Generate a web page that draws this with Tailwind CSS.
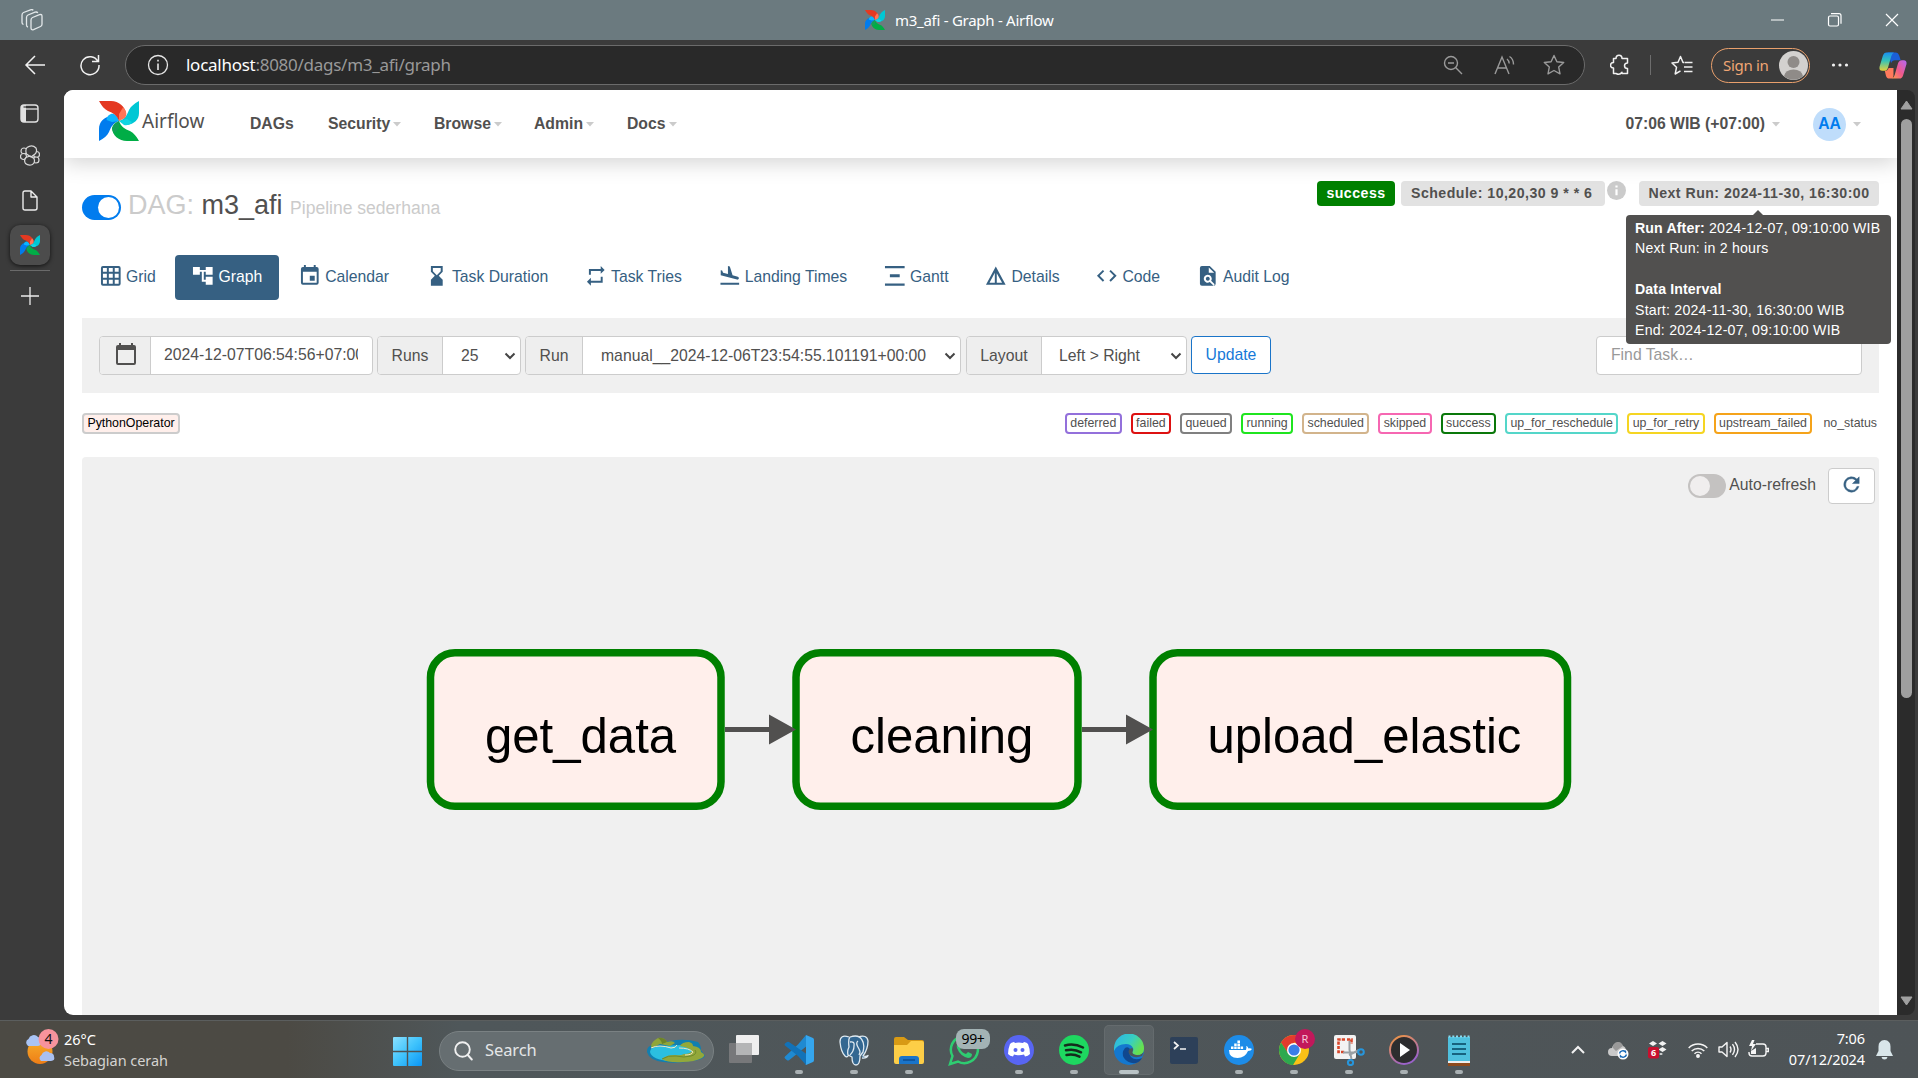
<!DOCTYPE html>
<html lang="en">
<head>
<meta charset="utf-8">
<title>m3_afi - Graph - Airflow</title>
<script src="https://cdn.jsdelivr.net/npm/@tailwindcss/browser@4"></script>
</head>
<body class="w-[1918px] h-[1078px] overflow-hidden bg-[#3b3b3b] flex flex-col font-['Noto_Sans',sans-serif]">

<svg class="hidden">
  <symbol id="pinwheel" viewBox="0 0 40 40">
    <path fill="#017cee" d="M0 40V28C0 21 5 16 12 15L20 20C14 22 12 26 10 31C8 35 5 37 0 40Z"/>
    <path fill="#0cb6ff" d="M7.500 19C8 14 12 12 15 13Q19 15 20 20L13 21Z"/>
    <path fill="#00ad46" d="M40 40H28C20 40 13 34 13 27L20 20C22 26 26 28 31 30C35 32 37 35 40 40Z"/>
    <path fill="#11a055" d="M13 27Q14 22 20 20L20 27L16 32Q13 30 13 27Z"/>
    <path fill="#00c7d4" d="M40 0V12C40 19 35 23 28 24L20 20C26 18 28 14 30 9C32 5 35 3 40 0Z"/>
    <path fill="#11d5e2" d="M33 21Q30 25 25 24L20 20L28 18Z"/>
    <path fill="#e43921" d="M0 0H12C20 0 26 6 27 12L20 20C18 14 14 12 9 10C5 8 3 5 0 0Z"/>
    <path fill="#ff7557" d="M24 6.500C28 10 28 14 26 17L20 20L20 13Z"/>
  </symbol>
  <symbol id="caret" viewBox="0 0 8 5"><path d="M0 0h8L4 4.500z" fill="#cbcbcb"/></symbol>
  <symbol id="chev" viewBox="0 0 12 8"><path d="M1.500 1.500l4.500 4.500 4.500-4.500" fill="none" stroke="#454545" stroke-width="2"/></symbol>
</svg>

<!-- Window title bar -->
<header class="relative h-[40px] shrink-0 bg-[#6b7a7f] flex items-center text-white">
  <svg class="ml-[21px] w-[23px] h-[22px]" viewBox="0 0 23 22" fill="none" stroke="#e3e8ea" stroke-width="1.300" stroke-linejoin="round"><path d="M11.500 8.500l7-2.800q2.500-.8 2.500 1.500v8q0 1.700-1.500 2.300l-7 3.200q-2.500.7-2.500-2V11q0-1.800 1.500-2.500zM7 18q-1.500-.3-1.500-2V8.500q0-1.800 1.500-2.500l7-2.800q2-.7 2.800.8M2.500 15.500Q1 15 1 13.500V6q0-1.800 1.500-2.500l7-2.700q2-.6 2.700.6"/></svg>
  <div class="ml-[821px] flex items-center gap-[10px]">
    <svg class="w-[20px] h-[20px]"><use href="#pinwheel"/></svg>
    <span class="text-[15px] tracking-[-0.27px] whitespace-nowrap">m3_afi - Graph - Airflow</span>
  </div>
  <svg class="ml-auto mr-[19px] w-[129px] h-[16px]" viewBox="0 0 129 16" fill="none" stroke="#fff" stroke-width="1.200"><path d="M1 8h13M116 2l12 12M128 2l-12 12"/><rect x="58.500" y="4" width="10" height="10" rx="1.500"/><path d="M61 1.700h8q2 0 2 2v8"/></svg>
</header>

<!-- Address toolbar -->
<div class="h-[50px] shrink-0 flex items-center">
  <svg class="ml-[24px] w-[22px] h-[20px]" viewBox="0 0 22 20" fill="none" stroke="#f2f2f2" stroke-width="1.500"><path d="M21 10H2M11 1L2 10l9 9"/></svg>
  <svg class="ml-[33px] w-[22px] h-[22px]" viewBox="0 0 22 22" fill="none" stroke="#f2f2f2" stroke-width="1.500"><path d="M19 7.500A9 9 0 1 0 20 11M19.500 1v6.500H13"/></svg>
  <div class="ml-[24px] w-[1460px] h-[40px] rounded-full border border-[#6b6b6b] bg-[#292929] flex items-center">
    <svg class="ml-[21px] w-[22px] h-[22px]" viewBox="0 0 22 22" fill="none" stroke="#e6e6e6" stroke-width="1.300"><circle cx="11" cy="11" r="9.500"/><path d="M11 9.500v6.500M11 5.800v1.800" stroke-width="1.600"/></svg>
    <span class="ml-[17px] text-[17px] tracking-[-0.27px] text-[#999] whitespace-nowrap"><span class="text-white">localhost</span>:8080/dags/m3_afi/graph</span>
    <svg class="ml-auto w-[20px] h-[20px]" viewBox="0 0 20 20" fill="none" stroke="#9a9a9a" stroke-width="1.400"><circle cx="8" cy="8" r="6.500"/><path d="M5 8h6M12.800 12.800L19 19"/></svg>
    <svg class="ml-[31px] w-[21px] h-[20px]" viewBox="0 0 21 20" fill="none" stroke="#9a9a9a" stroke-width="1.400"><path d="M1 19L8 2l7 17M3.500 13h9M13 4q2 1.500 2.200 4.500M15.500 1.500q4 2.500 4 8"/></svg>
    <svg class="ml-[28px] mr-[19px] w-[22px] h-[22px]" viewBox="0 0 22 22" fill="none" stroke="#9a9a9a" stroke-width="1.400" stroke-linejoin="round"><path d="M11 1.500l2.900 6.200 6.800.8-5 4.600 1.300 6.700-6-3.300-6 3.300 1.300-6.700-5-4.600 6.800-.8z"/></svg>
  </div>
  <svg class="ml-[25px] w-[20px] h-[22px]" viewBox="0 0 20 22" fill="none" stroke="#f0f0f0" stroke-width="1.500" stroke-linejoin="round"><path d="M6 4.500C6 0 12 0 12 4.500h5.500V9C13.500 9 13.500 14.500 17.500 14.500V19.500H12C12 15.500 12 22.500 6 19.500H3.500V14C-.5 14 -.5 8.500 3.500 8.500V4.500z"/></svg>
  <div class="ml-[20px] w-px h-[20px] bg-[#6d6d6d]"></div>
  <svg class="ml-[20px] w-[22px] h-[21px]" viewBox="0 0 22 21" fill="none" stroke="#f0f0f0" stroke-width="1.500" stroke-linejoin="round"><path d="M13.500 7.500l-1.500 0L9.500 1.500 7 7.200l-6 .8 4.500 4.300L4.200 19l5.300-3.200M14 7.500h7.500M13 12h8.500M13 16.500h8.500"/></svg>
  <div class="ml-[18px] w-[99px] h-[35px] rounded-full border-[1.5px] border-[#eaa06c] flex items-center justify-between pl-[11px] pr-px text-[#f0a674]">
    <span class="text-[15px] tracking-[-0.3px] whitespace-nowrap">Sign in</span>
    <svg class="w-[29px] h-[29px]" viewBox="0 0 29 29"><circle cx="14.500" cy="14.500" r="14.500" fill="#d3d1cf"/><circle cx="14.500" cy="11" r="6" fill="#8f8b88"/><path d="M5 25q1.500-6.500 9.500-6.500T24 25a14 14 0 0 1-19 0z" fill="#8f8b88"/></svg>
  </div>
  <svg class="ml-[21px] w-[18px] h-[4px]" viewBox="0 0 18 4" fill="#f2f2f2"><circle cx="2.500" cy="2" r="1.600"/><circle cx="9" cy="2" r="1.600"/><circle cx="15.500" cy="2" r="1.600"/></svg>
  <svg class="ml-[30px] w-[28px] h-[27px]" viewBox="0 0 29 27">
    <defs><linearGradient id="cpa" x1="0" y1="0" x2="0" y2="1"><stop offset="0" stop-color="#1a8ff0"/><stop offset=".45" stop-color="#35c3b8"/><stop offset="1" stop-color="#e8d13a"/></linearGradient><linearGradient id="cpb" x1="1" y1="0" x2="0" y2="1"><stop offset="0" stop-color="#b268f5"/><stop offset=".55" stop-color="#f0598b"/><stop offset="1" stop-color="#ff9b4a"/></linearGradient></defs>
    <path fill="#1b5fd8" d="M9 0h8q3 0 4 3.500L22.500 8h-6q-3 0-4 3z"/>
    <path fill="#ff7a5c" d="M14 27h-3q-3 0-3.800-3L6 19q3 0 4-3h5v8q-.5 2-1 3z"/>
    <path fill="url(#cpa)" d="M8 0h7.500q-2 1-2.800 4l-3.500 12q-1 3-4 3H3.500Q0 19 .5 15L4 3.500Q5 0 8 0z"/>
    <path fill="url(#cpb)" d="M21 27h-7.500q2-1 2.800-4l3.500-12q1-3 4-3h1.700q3.500 0 3 4L25 23.500q-1 3.500-4 3.500z"/>
  </svg>
</div>

<!-- Sidebar, page, scrollbar -->
<div class="h-[925px] shrink-0 flex">
  <aside class="w-[64px] shrink-0 flex flex-col items-center pr-[5px]">
    <svg class="mt-[14px] w-[19px] h-[19px]" viewBox="0 0 19 19"><path d="M1 4q0-3 3-3h2v17H4q-3 0-3-3z" fill="#e2e2e2"/><rect x="1" y="1" width="17" height="17" rx="3" fill="none" stroke="#e2e2e2" stroke-width="1.400"/><path d="M1 5h17" stroke="#e2e2e2" stroke-width="1.300"/><path d="M3.500 3h12" stroke="#3b3b3b" stroke-width="1.200"/></svg>
    <svg class="mt-[22px] w-[20px] h-[21px]" viewBox="0 0 20 21" fill="#3b3b3b" stroke="#d8d8d8" stroke-width="1.200"><circle cx="4" cy="6" r="3"/><circle cx="3.500" cy="11.500" r="3"/><circle cx="16.500" cy="9.500" r="3"/><circle cx="16" cy="15" r="3"/><path d="M7 2.500Q12-1 16 3q1.500 3.500-1 6L11 12 6.500 9Q5 5 7 2.500zM6 12.500l4-1.500 4 2.500q1.500 4-1.500 6-4 1.500-7-1-2-3 .5-6z"/></svg>
    <svg class="mt-[24px] w-[16px] h-[21px]" viewBox="0 0 16 21" fill="none" stroke="#ececec" stroke-width="1.400" stroke-linejoin="round"><path d="M1 3q0-2 2-2h6l6 6v11q0 2-2 2H3q-2 0-2-2zM9 1v6h6"/></svg>
    <div class="mt-[14px] w-[40px] h-[40px] rounded-[10px] bg-[#4c4c4c] shadow-[0_1px_4px_rgba(0,0,0,.7)] flex items-center justify-center"><svg class="w-[20px] h-[20px]"><use href="#pinwheel"/></svg></div>
    <div class="mt-[5px] w-[40px] h-px bg-[#6a6a6a]"></div>
    <svg class="mt-[16px] w-[18px] h-[18px]" viewBox="0 0 18 18" stroke="#ececec" stroke-width="1.300"><path d="M9 0v18M0 9h18"/></svg>
  </aside>

  <main class="w-[1833px] shrink-0 bg-white rounded-l-[9px] overflow-hidden flex flex-col font-['Liberation_Sans',Arial,sans-serif] text-[15.75px] text-[#51504f]">
    <nav class="relative z-10 h-[68px] shrink-0 flex items-center font-bold shadow-[0_5px_20px_rgba(0,0,0,.17)] bg-white whitespace-nowrap">
      <svg class="ml-[35px] mt-[-7px] w-[40px] h-[40px]"><use href="#pinwheel"/></svg>
      <span class="ml-[3px] mt-[-6px] w-[62px] font-normal text-[19px] font-['Noto_Sans',sans-serif]">Airflow</span>
      <span class="ml-[46px] w-[78px]">DAGs</span>
      <span class="w-[106px] flex items-center gap-[3px]">Security<svg class="w-[8px] h-[5px]"><use href="#caret"/></svg></span>
      <span class="w-[100px] flex items-center gap-[3px]">Browse<svg class="w-[8px] h-[5px]"><use href="#caret"/></svg></span>
      <span class="w-[93px] flex items-center gap-[3px]">Admin<svg class="w-[8px] h-[5px]"><use href="#caret"/></svg></span>
      <span class="flex items-center gap-[3px]">Docs<svg class="w-[8px] h-[5px]"><use href="#caret"/></svg></span>
      <span class="ml-auto flex items-center gap-[7px]">07:06 WIB (+07:00)<svg class="w-[8px] h-[5px]"><use href="#caret"/></svg></span>
      <span class="ml-[33px] w-[33px] h-[33px] rounded-full bg-[#bfddfb] text-[#017cee] flex items-center justify-center">AA</span>
      <svg class="ml-[7px] mr-[36px] w-[8px] h-[5px]"><use href="#caret"/></svg>
    </nav>

    <div class="px-[18px] flex flex-col flex-1">
      <div class="h-[97px] shrink-0 flex items-start">
        <div class="mt-[37px] w-[39px] h-[25px] rounded-full bg-[#017cee] p-[2px] flex justify-end"><div class="w-[21px] h-[21px] rounded-full bg-white"></div></div>
        <h3 class="ml-[7px] mt-[32px] text-[27px] leading-[31px] whitespace-nowrap"><span class="text-[#cbcbcb]">DAG:</span> m3_afi <span class="text-[17.55px] text-[#cbcbcb]">Pipeline sederhana</span></h3>
        <div class="ml-auto mt-[23px] flex items-start text-[14.175px] leading-[25px] font-bold tracking-[0.47px] whitespace-nowrap">
          <span class="w-[78px] h-[25px] rounded-[4px] bg-[#008000] text-white text-center">success</span>
          <span class="ml-[6px] w-[204px] h-[25px] rounded-[4px] bg-[#e2e2e2] pl-[10px]">Schedule: 10,20,30 9 * * 6</span>
          <svg class="ml-[2px] w-[19px] h-[19px]" viewBox="0 0 19 19"><circle cx="9.500" cy="9.500" r="9.500" fill="#cbcbcb"/><path d="M8.400 4.500h2.200v2H8.400zM8.400 8.200h2.200v6H8.400z" fill="#fff"/></svg>
          <span class="relative ml-[13px] w-[240px] h-[25px] rounded-[4px] bg-[#e2e2e2] text-center">Next Run: 2024-11-30, 16:30:00
            <span class="absolute z-20 left-[-13px] top-[34px] w-[265px] h-[129px] rounded-[4px] bg-[#51504f] text-white text-left font-normal tracking-[0.22px] leading-[20.4px] pl-[9px] pt-[3px]"><svg class="absolute left-[127px] top-[-5px] w-[10px] h-[5px]" viewBox="0 0 10 5"><path d="M0 5L5 0l5 5z" fill="#51504f"/></svg><b class="tracking-[0.12px]">Run After:</b> 2024-12-07, 09:10:00 WIB<br>Next Run: in 2 hours<br><br><b class="tracking-[0.12px]">Data Interval</b><br>Start: 2024-11-30, 16:30:00 WIB<br>End: 2024-12-07, 09:10:00 WIB</span>
          </span>
        </div>
      </div>

      <!-- View tabs -->
      <div class="h-[45px] shrink-0 flex gap-[2.250px] text-[#366082] fill-[#366082] whitespace-nowrap leading-[43px] [&>a]:flex [&>a]:pl-[16.800px] [&>a]:pr-[16.600px] [&>a]:gap-[3.600px] [&_svg]:w-[23.600px] [&_svg]:h-[23.600px] [&_svg]:mt-[9px]">
        <a><svg viewBox="0 0 24 24"><path d="M20 2H4a2 2 0 0 0-2 2v16a2 2 0 0 0 2 2h16a2 2 0 0 0 2-2V4a2 2 0 0 0-2-2zM8 20H4v-4h4zm0-6H4v-4h4zm0-6H4V4h4zm6 12h-4v-4h4zm0-6h-4v-4h4zm0-6h-4V4h4zm6 12h-4v-4h4zm0-6h-4v-4h4zm0-6h-4V4h4z"/></svg>Grid</a>
        <a class="bg-[#366082] text-white fill-white rounded-[4px]"><svg viewBox="0 0 24 24"><path d="M22 11V3h-7v3H9V3H2v8h7V8h2v10h4v3h7v-8h-7v3h-2V8h2v3z"/></svg>Graph</a>
        <a><svg viewBox="0 0 24 24"><path d="M17 12h-5v5h5v-5zM16 1v2H8V1H6v2H5a2 2 0 0 0-2 2v14a2 2 0 0 0 2 2h14a2 2 0 0 0 2-2V5a2 2 0 0 0-2-2h-1V1h-2zm3 18H5V8h14v11z"/></svg>Calendar</a>
        <a><svg viewBox="0 0 24 24"><path d="M6 2v6l4 4-4 4v6h12v-6l-4-4 4-4V2H6zm10 5.500L12 11.500 8 7.500V4h8v3.500z"/></svg>Task Duration</a>
        <a><svg viewBox="0 0 24 24"><path d="M7 7h10v3l4-4-4-4v3H5v6h2V7zm10 10H7v-3l-4 4 4 4v-3h12v-6h-2v4z"/></svg>Task Tries</a>
        <a><svg viewBox="0 0 24 24"><path d="M2.500 19h19v2h-19v-2zm16.840-3.150c.8.210 1.620-.26 1.840-1.060.21-.8-.26-1.620-1.060-1.840l-5.310-1.420-2.760-9.020L10.120 2v8.280L5.150 8.950l-.93-2.320-1.450-.39v5.170l16.570 4.440z"/></svg>Landing Times</a>
        <a><svg viewBox="0 0 24 24"><path d="M2 2h20v2.200H2zM7 10.500h10v3H7zM2 19.800h20V22H2z"/></svg>Gantt</a>
        <a><svg viewBox="0 0 24 24"><path d="M12 2.500L2 21h20L12 2.500zm-1 7V19H5.600L11 9zm2 0L18.400 19H13V9z"/></svg>Details</a>
        <a><svg viewBox="0 0 24 24"><path d="M9.400 16.600L4.800 12l4.600-4.600L8 6l-6 6 6 6 1.400-1.400zm5.200 0l4.600-4.600-4.600-4.600L16 6l6 6-6 6-1.400-1.400z"/></svg>Code</a>
        <a><svg viewBox="0 0 24 24"><path fill-rule="evenodd" d="M6 2a2 2 0 0 0-2 2v16a2 2 0 0 0 2 2h12a2 2 0 0 0 2-2V8l-6-6zM13 3.500L18.500 9H13zM12 11a4 4 0 0 1 3.400 6.100L19 20.700 18 22l-4-3.600A4 4 0 1 1 12 11zm0 2a2 2 0 1 0 .01 0z"/></svg>Audit Log</a>
      </div>

      <!-- Run filter form -->
      <div class="mt-[18px] h-[75px] shrink-0 bg-[#f0f0f0] flex items-start pt-[18px] pl-[17px] pr-[17px] whitespace-nowrap">
        <div class="w-[274px] h-[39px] flex rounded-[4px] border border-[#ccc] bg-white overflow-hidden">
          <span class="w-[51px] bg-[#eee] border-r border-[#ccc] flex items-center justify-center"><svg class="ml-[1px] w-[24px] h-[24px] fill-[#51504f] mt-[-3px]" viewBox="0 0 24 24"><path d="M20 3h-1V1h-2v2H7V1H5v2H4a2 2 0 0 0-2 2v16a2 2 0 0 0 2 2h16a2 2 0 0 0 2-2V5a2 2 0 0 0-2-2zm0 18H4V8h16z"/></svg></span>
          <span class="ml-[13px] w-[194px] overflow-hidden leading-[35px]">2024-12-07T06:54:56+07:00</span>
        </div>
        <div class="ml-[4px] w-[144px] h-[39px] flex items-center rounded-[4px] border border-[#ccc] bg-white overflow-hidden">
          <span class="w-[65px] h-full bg-[#eee] border-r border-[#ccc] flex items-center justify-center">Runs</span>
          <span class="ml-[18px]">25</span><svg class="ml-auto mr-[4px] w-[12px] h-[8px]"><use href="#chev"/></svg>
        </div>
        <div class="ml-[4px] w-[436px] h-[39px] flex items-center rounded-[4px] border border-[#ccc] bg-white overflow-hidden">
          <span class="w-[57px] h-full bg-[#eee] border-r border-[#ccc] flex items-center justify-center">Run</span>
          <span class="ml-[18px]">manual__2024-12-06T23:54:55.101191+00:00</span><svg class="ml-auto mr-[4px] w-[12px] h-[8px]"><use href="#chev"/></svg>
        </div>
        <div class="ml-[5px] w-[221px] h-[39px] flex items-center rounded-[4px] border border-[#ccc] bg-white overflow-hidden">
          <span class="w-[75px] h-full bg-[#eee] border-r border-[#ccc] flex items-center justify-center">Layout</span>
          <span class="ml-[17px]">Left &gt; Right</span><svg class="ml-auto mr-[4px] w-[12px] h-[8px]"><use href="#chev"/></svg>
        </div>
        <span class="ml-[4px] w-[80px] h-[38px] rounded-[4px] border border-[#1a74c8] bg-white text-[#1579d8] text-center leading-[35px]">Update</span>
        <span class="ml-auto w-[266px] h-[39px] rounded-[4px] border border-[#ccc] bg-white text-[#999] pl-[14px] leading-[35px]">Find Task…</span>
      </div>

      <!-- Operator and state legend -->
      <div class="mt-[20px] h-[21px] shrink-0 flex gap-[9px] text-[12.375px] leading-[16px] whitespace-nowrap [&>span]:border-2 [&>span]:rounded-[4px] [&>span]:px-[3.400px]">
        <span class="mr-auto border-[#ccc] bg-[#ffefeb] text-black">PythonOperator</span>
        <span class="border-[#9370db]">deferred</span>
        <span class="border-[#dd1111]">failed</span>
        <span class="border-[#808080]">queued</span>
        <span class="border-[#1fe51f]">running</span>
        <span class="border-[#d2b48c]">scheduled</span>
        <span class="border-[#f667b2]">skipped</span>
        <span class="border-[#0a780a]">success</span>
        <span class="border-[#54d6c9]">up_for_reschedule</span>
        <span class="border-[#f5d522]">up_for_retry</span>
        <span class="border-[#f5a31a]">upstream_failed</span>
        <span class="border-white !pr-0 !pl-0">no_status</span>
      </div>

      <!-- Graph canvas -->
      <div class="relative mt-[23px] flex-1 bg-[#f0f0f0] rounded-t-[4px]">
        <svg class="absolute inset-0 w-[1797px] h-[558px] font-['Liberation_Sans',Arial,sans-serif]" viewBox="82 457 1797 558">
          <g fill="#ffefeb" stroke="#008000" stroke-width="7.500">
            <rect x="430.500" y="652.800" width="290.500" height="153.500" rx="24.500"/>
            <rect x="796" y="652.800" width="282" height="153.500" rx="24.500"/>
            <rect x="1153" y="652.800" width="414.500" height="153.500" rx="24.500"/>
          </g>
          <g fill="#51504f"><path d="M725 727h44v-12.500l27 15-27 15V732h-44zM1082 727h44v-12.500l27 15-27 15V732h-44z"/></g>
          <g fill="#000" font-size="49.100"><text x="485" y="752.500">get_data</text><text x="850.500" y="752.500">cleaning</text><text x="1207.500" y="752.500">upload_elastic</text></g>
        </svg>
        <div class="absolute top-[11px] right-[4px] flex items-start">
          <div class="mt-[6px] w-[38px] h-[24px] rounded-full bg-[#c4c2c1] p-[2px]"><div class="w-[20px] h-[20px] rounded-full bg-[#f0eeee]"></div></div>
          <span class="ml-[3px] mt-[7px] leading-[20px] whitespace-nowrap">Auto-refresh</span>
          <div class="ml-[12px] w-[47px] h-[36px] rounded-[4px] border border-[#ccc] bg-white flex items-center justify-center"><svg class="w-[23px] h-[23px] fill-[#366082] mt-[-3px]" viewBox="0 0 24 24"><path d="M17.650 6.350A8 8 0 1 0 19.730 14h-2.080A6 6 0 1 1 12 6c1.660 0 3.140.69 4.220 1.780L13 11h7V4l-2.350 2.350z" stroke="#366082" stroke-width=".5"/></svg></div>
        </div>
      </div>
    </div>
  </main>

  <div class="w-[18px] bg-[#2b2b2b] rounded-r-[8px] flex flex-col items-center">
    <svg class="mt-[10px] w-[13px] h-[10px]" viewBox="0 0 13 10"><path d="M6.500 1L12 9H1z" fill="#a0a0a0" stroke="#a0a0a0" stroke-linejoin="round"/></svg>
    <div class="mt-[9px] w-[11px] h-[579px] rounded-full bg-[#9f9f9f]"></div>
    <svg class="mt-auto mb-[9px] w-[13px] h-[10px]" viewBox="0 0 13 10"><path d="M6.500 9L1 1h11z" fill="#a0a0a0" stroke="#a0a0a0" stroke-linejoin="round"/></svg>
  </div>
</div>

<!-- Taskbar -->
<footer class="mt-[5px] h-[58px] shrink-0 flex items-center border-t border-[#5b5e5e] bg-linear-to-r from-[#4c4a44] from-15% via-[#4f575a] via-24% to-[#4e5457] text-white whitespace-nowrap">
  <svg class="ml-[24px] w-[36px] h-[38px] mt-[-6px]" viewBox="0 0 36 38">
    <defs><linearGradient id="sun" x1="0" y1="0" x2="0" y2="1"><stop offset="0" stop-color="#f7b02c"/><stop offset="1" stop-color="#ee7d16"/></linearGradient></defs>
    <circle cx="16" cy="23.500" r="12.500" fill="url(#sun)"/>
    <path d="M4 18a4 4 0 0 1 .5-7A5.500 5.500 0 0 1 14 9q4 1 3.500 5t-4 4z" fill="#a9c4f5"/><path d="M17 33a3.500 3.500 0 0 1 .5-6A5 5 0 0 1 26 25q4 0 4 3.500 1.500 4-3 4.500z" fill="#a9c0f2"/>
    <circle cx="24.500" cy="11" r="10" fill="#f7939d"/><text x="20.500" y="16" font-size="14" fill="#111">4</text>
  </svg>
  <div class="ml-[4px] w-[329px] text-[14.500px] leading-[20.500px] tracking-[-0.05px]">26°C<br><span class="text-[#d4d3d1]">Sebagian cerah</span></div>
  <svg class="w-[29px] h-[29px] mt-[3px]" viewBox="0 0 29 29"><defs><linearGradient id="win" gradientUnits="userSpaceOnUse" x1="0" y1="0" x2="29" y2="29"><stop offset="0" stop-color="#8be0ff"/><stop offset=".5" stop-color="#3fc3fc"/><stop offset="1" stop-color="#0a95f5"/></linearGradient></defs><path fill="url(#win)" d="M0 1q0-1 1-1h12.800v13.800H0zM15.200 0H28q1 0 1 1v12.800H15.200zM0 15.200h13.800V29H1q-1 0-1-1zM15.200 15.200H29V28q0 1-1 1H15.200z"/></svg>
  <div class="ml-[17px] mt-[2px] w-[275px] h-[40px] rounded-full bg-[#666e71] border border-[#7a8183] flex items-center">
    <svg class="ml-[14px] w-[19px] h-[20px]" viewBox="0 0 19 20" fill="none" stroke="#f0f0f0" stroke-width="1.900" stroke-linecap="round"><circle cx="8.500" cy="8.500" r="7.300"/><path d="M13.800 14l4 4.500"/></svg>
    <span class="ml-[12px] text-[16.500px] text-[#e4e6e7] tracking-[-0.1px]">Search</span>
    <svg class="ml-auto mr-[7px] w-[60px] h-[27px]" viewBox="0 0 60 27">
      <path d="M1 15Q0 9 9 7L30 3q12-1 22 2 3 3 3 8l4 6q-2 4-13 5-14 3-29 1Q3 23 1 15z" fill="#117fb0"/>
      <path d="M4 15Q4 10 14 9l24-1q12 4 10 10-12 7-24 6-18-1-20-9z" fill="#2bbfe0"/>
      <path d="M5 9Q6 4 12 1q6-1 9 4 6-2 8 1l-5 3-10-2-8 4z" fill="#8fa53a"/><path d="M12 1q6-1 9 4l-5 2q0-3-4-6z" fill="#6d8428"/><path d="M5 11q8-4 20 0 5 0 6-3" fill="none" stroke="#f3e9c8"/>
      <path d="M34 9q2-4 9-4 4 1 4 4 8 1 8 6 6 3 1 6-8 4-19 4-15 1-21-3 4-4 13-4 5 1 9-1 6 0 8-3-2-3-12-5z" fill="#93a83a"/><path d="M16 22q6-4 14-3 8 2 15 0 7-2 4-6" fill="none" stroke="#6f8a2c"/><path d="M33 11q10 0 14 4-1 3-8 3" fill="none" stroke="#f0e6c0"/>
    </svg>
  </div>
  <div class="ml-[2px] flex h-full [&>div]:relative [&>div]:w-[55px] [&>div]:flex [&>div]:justify-center [&>div]:pt-[13px] [&>div>svg]:w-[32px] [&>div>svg]:h-[32px] [&_i]:absolute [&_i]:bottom-[4px] [&_i]:w-[8px] [&_i]:h-[4px] [&_i]:rounded-full [&_i]:bg-[#a9b0b3]">
    <div><svg viewBox="0 0 32 32"><rect x="1" y="9" width="23" height="20" rx="1" fill="#77787a"/><rect x="8" y="1" width="23" height="20" rx="1" fill="#efefef"/><path d="M8 9h16v12H8z" fill="#b4b5b6"/></svg></div>
    <div><svg viewBox="0 0 32 32"><path d="M23 1l-8 9.500L2 22.500q-1 1 0 2l2 1.700q1 .6 2 0L25 11z" fill="#1f8ad2"/><path d="M2 9.500q-1 1 0 2L15 22l8 9 2-10L6 8q-1-.6-2 0z" fill="#1272b8"/><path d="M23 1l7 3q1 .5 1 2v20q0 1.500-1 2l-7 3q-.8 0 0-1V2z" fill="#35a6ee"/></svg><i></i></div>
    <div><svg viewBox="0 0 32 32" fill="#336791" stroke="#dfe9f0" stroke-width="1.300" stroke-linejoin="round"><path d="M11 3Q2 0 2 8q1 10 5 14 2 2 4-1l1 0"/><path d="M20 3q9-3 10 4 0 8-5 15 3 1 5-.5-1 3-6 2.500"/><path d="M12 3q9-3 12 3 3 4 1 12l-3 4q0 9-4 9t-4-8l-4-2q-1-4 1-8-1-8 1-10z"/><path d="M20 7q-3 2 1 8 2 3 0 6M12 8q5-1 4 4 0 5-4 9" fill="none"/></svg><i></i></div>
    <div><svg viewBox="0 0 32 32"><path d="M1 5q0-2 2-2h8l4 3h14q2 0 2 2v4H1z" fill="#d89a14"/><path d="M1 11h13l4-4h11q2 0 2 2v19q0 2-2 2H3q-2 0-2-2z" fill="#fdce47"/><path d="M6 30v-5q0-3 3-3h14q3 0 3 3v5z" fill="#1a74c9"/><path d="M10 26h12" stroke="#0d4d92" stroke-width="1.500"/></svg><i></i></div>
    <div><svg viewBox="0 0 32 32"><path d="M2 30l2.500-8a13.500 13.500 0 1 1 5.500 5.500z" fill="none" stroke="#2ecc71" stroke-width="2.500"/><path d="M11 9q-3 1-2 5 3 8 11 10 4 0 4-4l-4-2-2 2q-4-1-6-5l2-2z" fill="#2ecc71"/></svg>
      <span class="absolute left-[20px] top-[8px] w-[34px] h-[20px] rounded-[8px] bg-[#a3b3b5] text-black text-[14px] leading-[20px] text-center tracking-[-0.3px]">99+</span></div>
    <div><svg viewBox="0 0 32 32"><circle cx="16" cy="16" r="15" fill="#5865f2"/><path d="M12 9q4-1 8 0l1-1q3 .5 4 2 2 5 2 10-2 2-5 2.500l-1-2q-5 1.500-10 0l-1 2Q7 22 5 20q0-5 2-10 1-1.500 4-2z" fill="#fff"/><circle cx="12.500" cy="16" r="2" fill="#5865f2"/><circle cx="19.500" cy="16" r="2" fill="#5865f2"/></svg><i></i></div>
    <div><svg viewBox="0 0 32 32"><circle cx="16" cy="16" r="15" fill="#1ed760"/><path d="M7 11.500q9-2.500 18 2M8 16.300q8-2 15 2M8.500 21q7-1.500 13 1.700" fill="none" stroke="#142b1c" stroke-width="2.500" stroke-linecap="round"/></svg><i></i></div>
    <div><span class="absolute left-[2.500px] top-[4px] w-[50px] h-[50px] rounded-[5px] bg-white/8 border border-white/6"></span>
      <svg class="relative" viewBox="0 0 32 32"><defs><linearGradient id="eg" x1="0" y1="0" x2="1" y2=".5"><stop offset="0" stop-color="#2bb3ea"/><stop offset=".6" stop-color="#38cfc0"/><stop offset="1" stop-color="#67e04f"/></linearGradient></defs><circle cx="16" cy="16" r="15" fill="#1478cf"/><path d="M1 14A15 15 0 0 1 31 15q0 6-7 6-5 0-5-3 2-1 1-4-2-4-7-4Q4 10 1 17z" fill="url(#eg)"/><path d="M12 14q-4 5-1 10 4 6 12 5 4-1 6-5-7 3-11-1-3-4-1-8-2-3-5-1z" fill="#10488f"/><path d="M17.500 14.500q-4 3 0 7 5 3 11.500.5l2-5q-2 5-8 4-4-1-3.500-3 1-2 0-4z" fill="#4c5659"/></svg><i class="!w-[20px] !bg-[#b9c3c6]"></i></div>
    <div><svg viewBox="0 0 32 32"><rect x="2" y="3" width="28" height="27" rx="2" fill="#2d4059"/><path d="M6 8l4 3.500L6 15M12 15h6" fill="none" stroke="#f2f2f2" stroke-width="1.700"/></svg></div>
    <div><svg viewBox="0 0 32 32"><circle cx="16" cy="16" r="15" fill="#1d8ce8"/><path d="M6 16h17q1-3 0-4 2 0 2.500 2.500 2-.5 3.500.5-1 2-4 2-3 7-10.500 7Q6 24 6 16zM8 12.500h2.500V15H8zM11.200 12.500h2.500V15h-2.500zM14.400 12.500H17V15h-2.600zM17.600 12.500h2.500V15h-2.500zM11.200 9.500h2.500V12h-2.500zM14.400 9.500H17V12h-2.600zM14.400 6.500H17V9h-2.600z" fill="#fff"/></svg><i></i></div>
    <div><svg viewBox="0 0 32 32"><circle cx="16" cy="16" r="15" fill="#fbc116"/><path d="M3 8.500A15 15 0 0 1 29 8.500H16l-6 11z" fill="#e33b2e"/><path d="M3 8.500A15 15 0 0 0 15 31l7-11.500-12-.5z" fill="#2da94f"/><circle cx="16" cy="16" r="7" fill="#fff"/><circle cx="16" cy="16" r="5.600" fill="#3a7de8"/></svg>
      <span class="absolute left-[29px] top-[8px] w-[20px] h-[20px] rounded-full bg-[#c2185b] text-[#f5c6d8] text-[11px] leading-[20px] text-center">R</span><i></i></div>
    <div><svg viewBox="0 0 32 32"><rect x="1" y="1" width="22" height="24" rx="2" fill="#f3f3f3"/><path d="M12 5.500H5.500V18H12M14 5.500h4.500V10" fill="none" stroke="#d8472b" stroke-width="2.600" stroke-dasharray="3.200 1.100"/><path d="M16.500 7v9l2 9M10 18.500h8l7-.5M16 21l10-5" fill="none" stroke="#9aa0a4" stroke-width="2"/><circle cx="28" cy="18" r="2.800" fill="none" stroke="#2796dc" stroke-width="2"/><circle cx="17.500" cy="28.500" r="2.600" fill="none" stroke="#2796dc" stroke-width="2"/></svg><i></i></div>
    <div><svg viewBox="0 0 32 32"><defs><linearGradient id="mp" x1="0" y1="0" x2=".5" y2="1"><stop offset="0" stop-color="#f3983c"/><stop offset="1" stop-color="#9a62c9"/></linearGradient></defs><circle cx="16" cy="16" r="14" fill="#2d2d2f" stroke="url(#mp)" stroke-width="2"/><path d="M12 9l10 7-10 7z" fill="#fff"/></svg><i></i></div>
    <div><svg viewBox="0 0 32 32"><path d="M5 27h22v5H5z" fill="#8d4a1c"/><path d="M5 27h22v2H5z" fill="#eee"/><path d="M5 3h22v24H5z" fill="#4fc0de"/><path d="M6.500 3.500v-2M10.300 3.500v-2M14 3.500v-2M18 3.500v-2M21.700 3.500v-2M25.500 3.500v-2" stroke="#8adcf0" stroke-width="2"/><path d="M9 10h14M9 15h14M9 20h14" stroke="#17627f" stroke-width="1.800"/></svg><i></i></div>
  </div>
  <svg class="ml-auto w-[14px] h-[9px]" viewBox="0 0 14 9" fill="none" stroke="#f2f2f2" stroke-width="2"><path d="M1 8l6-6 6 6"/></svg>
  <svg class="ml-[23px] w-[21px] h-[18px] mt-[3px]" viewBox="0 0 21 18"><path d="M4 14a4 4 0 0 1 0-8 6 6 0 0 1 11-2q3 1 3 5v5z" fill="#c9c9c9"/><path d="M5 6a5 5 0 0 1 10-2l-7 5z" fill="#999"/><circle cx="15" cy="12" r="5.500" fill="#fff"/><path d="M11.500 11.500a3.500 3.500 0 0 1 6-1.500v-1.500M18.500 12.500a3.500 3.500 0 0 1-6 1.500v1.500" fill="none" stroke="#1668b8" stroke-width="1.400"/></svg>
  <svg class="ml-[19px] w-[19px] h-[19px]" viewBox="0 0 19 19"><path d="M1 3.500L5 1l4 2.500L5 6zM10.500 3.500l4-2.500 4 2.500-4 2.500zM10.500 9.500l4-2.500 4 2.500-4 2.500zM11 14l2-1 2 1-2 1z" fill="#f2f2f2"/><rect x="0" y="7" width="11" height="11.500" rx="2" fill="#c8102e"/><text x="3" y="16.300" font-size="9" font-weight="bold" fill="#fff">6</text></svg>
  <svg class="ml-[21px] w-[20px] h-[16px]" viewBox="0 0 20 16" fill="none" stroke="#f5f5f5" stroke-width="1.500"><path d="M.7 6a13 13 0 0 1 18.600 0M3.700 9a9 9 0 0 1 12.600 0M6.500 11.700a5 5 0 0 1 7 0"/><circle cx="10" cy="14" r="1.200" fill="#f5f5f5"/></svg>
  <svg class="ml-[10px] w-[21px] h-[17px]" viewBox="0 0 21 17" fill="none" stroke="#f5f5f5" stroke-width="1.400" stroke-linejoin="round"><path d="M1 6h3l5-4.500v14L4 11H1zM12 5.500q2 3 0 6M14.500 3.200q4 5.300 0 10.600M17 1q6 7.500 0 15"/></svg>
  <svg class="ml-[9px] w-[21px] h-[18px] mt-[-2px]" viewBox="0 0 21 18" fill="none" stroke="#f5f5f5" stroke-width="1.400"><path d="M8 4h7q3 0 3 3v6q0 3-3 3H4q-3 0-3-3v-1M18.700 8.500h1.600v3h-1.600"/><path d="M4 0L1 6h3l-1 5 5-7H5l1.500-4zM3 14v-3l5-3v6z" fill="#f5f5f5" stroke="none"/></svg>
  <div class="ml-[12px] w-[84px] text-right text-[14.500px] leading-[20.500px] tracking-[-0.1px] mt-[-2px]">7:06<br>07/12/2024</div>
  <svg class="ml-[11px] mr-[25px] w-[17px] h-[20px]" viewBox="0 0 17 20" fill="#d9e6ea"><path d="M8.500 0q6 .5 6 6.500v4.500l2.500 5H0l2.500-5V6.500q0-6 6-6.500zM5.500 17h6q-.5 2.500-3 2.500t-3-2.500z"/></svg>
</footer>
</body>
</html>
